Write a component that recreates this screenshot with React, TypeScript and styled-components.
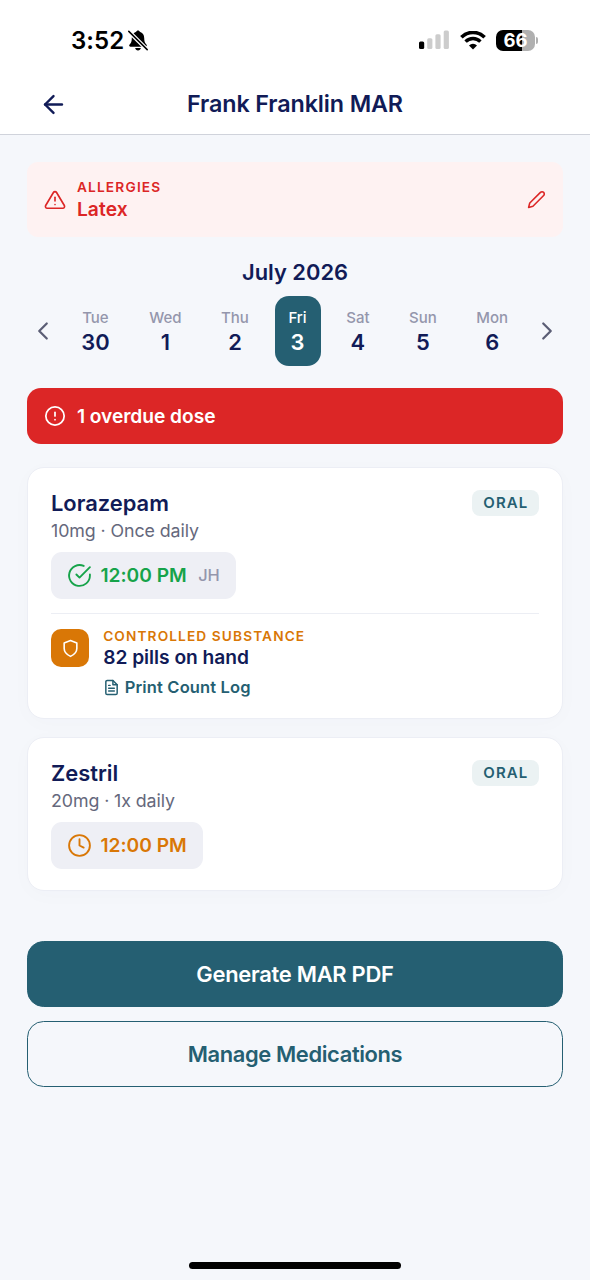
import React from 'react';
import styled, { createGlobalStyle } from 'styled-components';
import {
  FiAlertCircle,
  FiAlertTriangle,
  FiArrowLeft,
  FiCheckCircle,
  FiChevronLeft,
  FiChevronRight,
  FiClock,
  FiEdit2,
  FiFileText,
  FiShield,
} from 'react-icons/fi';

const color = {
  navy: '#111b57',
  teal: '#255f72',
  red: '#dc2626',
  amber: '#d97706',
  green: '#16a34a',
  slate: '#65687c',
  muted: '#9496ac',
  page: '#f5f7fb',
  chip: '#eeeff5',
};

const GlobalStyle = createGlobalStyle`
  * { box-sizing: border-box; }
  body {
    margin: 0;
    background: ${color.page};
    font-family: Inter, "Liberation Sans", sans-serif;
    color: ${color.navy};
  }
  button { font: inherit; color: inherit; border: 0; background: none; padding: 0; }
  svg { display: block; flex: none; }
`;

const Text = styled.span<{ $size: number; $line: number; $weight?: number; $color?: string; $track?: number }>`
  display: block;
  white-space: nowrap;
  font-size: ${p => p.$size}px;
  line-height: ${p => p.$line}px;
  font-weight: ${p => p.$weight ?? 600};
  color: ${p => p.$color ?? 'inherit'};
  letter-spacing: ${p => p.$track ?? 0}px;
`;

const Screen = styled.div`
  display: flex;
  flex-direction: column;
  width: 590px;
  height: 1280px;
  overflow: hidden;
`;

const Top = styled.header`
  height: 135px;
  background: #fff;
  border-bottom: 1px solid #d0d3db;
`;

const StatusBar = styled.div`
  display: flex;
  align-items: center;
  justify-content: space-between;
  height: 74px;
  padding: 6px 52px 0 71px;
  color: #000;
`;

const StatusGroup = styled.div<{ $gap: number }>`
  display: flex;
  align-items: center;
  gap: ${p => p.$gap}px;
`;

const Time = styled.time`
  padding-top: 2px;
  font-size: 24px;
  line-height: 30px;
  font-weight: 600;
  letter-spacing: 0.1px;
`;

const NavBar = styled.nav`
  display: grid;
  grid-template-columns: 60px 1fr 60px;
  align-items: center;
  justify-items: center;
  height: 60px;
  padding: 0 23px;
`;

const Battery = styled.div`
  display: flex;
  align-items: center;
  gap: 1px;
  &::after {
    content: '';
    width: 2px;
    height: 7px;
    border-radius: 0 2px 2px 0;
    background: #b0b0b0;
  }
`;

const BatteryBody = styled.div`
  display: flex;
  align-items: center;
  justify-content: center;
  width: 39px;
  height: 21px;
  border-radius: 7px;
  background: linear-gradient(90deg, #000 66%, #b0b0b0 66%);
`;

const Main = styled.main`
  display: flex;
  flex-direction: column;
  flex: 1;
  padding: 27px 27.4px 0;
`;

const AllergyBanner = styled.section`
  display: flex;
  align-items: center;
  gap: 11px;
  height: 75px;
  padding: 0 16.5px;
  border-radius: 11px;
  background: #fef2f2;
  color: ${color.red};
`;

const Grow = styled.div`
  flex: 1;
`;

const Month = styled.h2`
  margin: 22px 0 10.4px;
  text-align: center;
  font-size: 21.9px;
  line-height: 27px;
  font-weight: 600;
`;

const Week = styled.div`
  display: flex;
  align-items: center;
  justify-content: space-between;
  height: 70px;
  padding: 0 0.7px;
  color: #5b5e75;
`;

const Days = styled.div`
  display: flex;
  flex: 1;
  justify-content: space-around;
  padding: 0 4px 0 3.4px;
`;

const Day = styled.button<{ $selected?: boolean }>`
  display: flex;
  flex-direction: column;
  align-items: center;
  justify-content: center;
  height: 70px;
  padding: 1px 13.9px 0;
  border-radius: 14px;
  color: ${p => (p.$selected ? '#fff' : color.navy)};
  background: ${p => (p.$selected ? color.teal : 'transparent')};
`;

const OverdueBanner = styled.section`
  display: flex;
  align-items: center;
  gap: 11px;
  height: 56px;
  margin-top: 22px;
  padding: 0 16.5px;
  border-radius: 14px;
  background: ${color.red};
  color: #fff;
`;

const Card = styled.article<{ $top: number; $height: number }>`
  height: ${p => p.$height}px;
  margin-top: ${p => p.$top}px;
  padding: 21px 22.6px 0;
  border: 1px solid #eceef5;
  border-radius: 17px;
  background: #fff;
  box-shadow: 0 4px 22px rgba(20, 27, 87, 0.018);
`;

const CardHead = styled.div`
  display: flex;
  justify-content: space-between;
  align-items: flex-start;
`;

const Badge = styled.span`
  display: flex;
  align-items: center;
  height: 26px;
  margin-top: 1px;
  padding: 1px 10.6px 0 11px;
  border-radius: 8px;
  background: #ebf2f3;
`;

const Dose = styled.div<{ $color: string }>`
  display: flex;
  width: fit-content;
  align-items: center;
  height: 47px;
  margin-top: 8px;
  padding: 0 16.5px;
  border-radius: 11px;
  background: ${color.chip};
  color: ${p => p.$color};
  svg { margin-right: 8px; }
`;

const Initials = styled.span`
  margin-left: 11.5px;
  font-size: 16.4px;
  letter-spacing: -0.2px;
  font-weight: 500;
  color: ${color.muted};
`;

const Controlled = styled.section`
  display: flex;
  gap: 13.7px;
  margin-top: 14px;
  padding-top: 15px;
  border-top: 1px solid #eceef4;
`;

const ControlledInfo = styled.div`
  margin-top: -0.6px;
`;

const ShieldTile = styled.div`
  display: grid;
  place-items: center;
  flex: none;
  width: 38.5px;
  height: 38.5px;
  border-radius: 10px;
  background: ${color.amber};
  color: #fff;
`;

const PrintLink = styled.button`
  display: flex;
  align-items: center;
  gap: 4.5px;
  margin-top: 9px;
  color: ${color.teal};
`;

const Actions = styled.div`
  display: flex;
  flex-direction: column;
  gap: 14px;
  margin-top: 49.8px;
`;

const ActionButton = styled.button<{ $primary?: boolean }>`
  display: flex;
  align-items: center;
  justify-content: center;
  height: 66px;
  border: 1.4px solid ${color.teal};
  border-radius: 16.5px;
  background: ${p => (p.$primary ? color.teal : 'transparent')};
  color: ${p => (p.$primary ? '#fff' : color.teal)};
`;

const HomeIndicator = styled.div`
  width: 212px;
  height: 7px;
  margin: auto auto 11px;
  border-radius: 4px;
  background: #000;
`;

const BellOff = () => (
  <svg width="20" height="21" viewBox="0 0 20 21">
    <path
      d="M10 .4c.9 0 1.6.6 1.8 1.4 2.800.8 4.400 3.200 4.400 6.200 0 3.500.7 4.800 2 6.200.5.6.6 1 .6 1.400 0 .7-.5 1.100-1.300 1.100H2.500c-.8 0-1.300-.4-1.300-1.100 0-.4.1-.8.6-1.400 1.300-1.400 2-2.700 2-6.200 0-3 1.600-5.400 4.400-6.200C8.400 1 9.100.4 10 .4Z M7.200 18h5.600c-.2 1.500-1.300 2.400-2.800 2.400S7.400 19.500 7.200 18Z"
      fill="#000"
    />
    <path d="M.6 1.200 19.400 20" stroke="#fff" strokeWidth="4" />
    <path d="M.8 1.400 19.200 19.600" stroke="#000" strokeWidth="1.500" strokeLinecap="round" />
  </svg>
);

const Signal = () => (
  <svg width="31" height="20" viewBox="0 0 31 20">
    <rect x="0" y="11.500" width="5.200" height="7.500" rx="1.500" fill="#000" />
    <rect x="8.200" y="8.200" width="5.200" height="10.800" rx="1.500" fill="#ccc" />
    <rect x="16.400" y="4.300" width="5.200" height="14.700" rx="1.500" fill="#ccc" />
    <rect x="24.700" y="0.400" width="5.200" height="18.600" rx="1.500" fill="#ccc" />
  </svg>
);

const Wifi = () => (
  <svg width="26" height="19" viewBox="0 0 26 19" fill="none" stroke="#000">
    <path d="M1.400 6.200a16.500 16.500 0 0 1 23.200 0" strokeWidth="3.600" />
    <path d="M5.600 10.600a10.500 10.500 0 0 1 14.800 0" strokeWidth="3.400" />
    <path d="M13 18.500 9 14.400a6 6 0 0 1 8 0Z" fill="#000" stroke="none" />
  </svg>
);

const days = [
  ['Tue', '30'],
  ['Wed', '1'],
  ['Thu', '2'],
  ['Fri', '3'],
  ['Sat', '4'],
  ['Sun', '5'],
  ['Mon', '6'],
];

function MedicationHead({ name, detail }: { name: string; detail: string }) {
  return (
    <CardHead>
      <div>
        <Text $size={21.9} $line={28}>{name}</Text>
        <Text $size={17.8} $line={27} $weight={400} $color={color.slate} $track={-0.08}>{detail}</Text>
      </div>
      <Badge>
        <Text $size={15} $line={20} $color={color.teal} $track={1.1}>ORAL</Text>
      </Badge>
    </CardHead>
  );
}

export default function App() {
  return (
    <Screen>
      <GlobalStyle />
      <Top>
        <StatusBar>
          <StatusGroup $gap={4}>
            <Time>3:52</Time>
            <BellOff />
          </StatusGroup>
          <StatusGroup $gap={10}>
            <Signal />
            <Wifi />
            <Battery>
              <BatteryBody>
                <Text $size={18.5} $line={21} $weight={650} $color="#fff">66</Text>
              </BatteryBody>
            </Battery>
          </StatusGroup>
        </StatusBar>
        <NavBar>
          <FiArrowLeft size={29} />
          <Text $size={23.3} $line={30} $track={-0.12}>Frank Franklin MAR</Text>
        </NavBar>
      </Top>

      <Main>
        <AllergyBanner>
          <FiAlertTriangle size={22} strokeWidth={1.8} />
          <Grow>
            <Text $size={13.7} $line={18} $track={1.18}>ALLERGIES</Text>
            <Text $size={19.2} $line={26} $weight={570} $track={0.1}>Latex</Text>
          </Grow>
          <FiEdit2 size={19} />
        </AllergyBanner>

        <Month>July 2026</Month>
        <Week>
          <FiChevronLeft size={30} strokeWidth={1.8} />
          <Days>
            {days.map(([name, date]) => (
              <Day key={name} $selected={name === 'Fri'}>
                <Text $size={15} $line={21} $weight={500} $color={name === 'Fri' ? '#fff' : color.muted}>
                  {name}
                </Text>
                <Text $size={21.9} $line={29}>{date}</Text>
              </Day>
            ))}
          </Days>
          <FiChevronRight size={30} strokeWidth={1.8} />
        </Week>

        <OverdueBanner>
          <FiAlertCircle size={22} strokeWidth={1.9} />
          <Text $size={19.2} $line={26} $weight={570} $track={-0.04}>1 overdue dose</Text>
        </OverdueBanner>

        <Card $top={22.6} $height={252.5}>
          <MedicationHead name="Lorazepam" detail="10mg · Once daily" />
          <Dose $color={color.green}>
            <FiCheckCircle size={25} strokeWidth={1.8} />
            <Text $size={19.2} $line={26} $weight={580} $track={-0.03}>12:00 PM</Text>
            <Initials>JH</Initials>
          </Dose>
          <Controlled>
            <ShieldTile>
              <FiShield size={19} />
            </ShieldTile>
            <ControlledInfo>
              <Text $size={13.7} $line={16} $color={color.amber} $track={1.1}>CONTROLLED SUBSTANCE</Text>
              <Text $size={19.2} $line={26} $weight={570} $track={-0.03}>82 pills on hand</Text>
              <PrintLink>
                <FiFileText size={17} strokeWidth={2.1} />
                <Text $size={16.5} $line={17} $weight={570} $track={0.15}>Print Count Log</Text>
              </PrintLink>
            </ControlledInfo>
          </Controlled>
        </Card>

        <Card $top={17.5} $height={154.5}>
          <MedicationHead name="Zestril" detail="20mg · 1x daily" />
          <Dose $color={color.amber}>
            <FiClock size={25} strokeWidth={1.8} />
            <Text $size={19.2} $line={26} $weight={580} $track={-0.03}>12:00 PM</Text>
          </Dose>
        </Card>

        <Actions>
          <ActionButton $primary>
            <Text $size={21.9} $line={28} $weight={560} $track={-0.26}>Generate MAR PDF</Text>
          </ActionButton>
          <ActionButton>
            <Text $size={21.9} $line={28} $weight={560} $track={-0.37}>Manage Medications</Text>
          </ActionButton>
        </Actions>
        <HomeIndicator />
      </Main>
    </Screen>
  );
}
